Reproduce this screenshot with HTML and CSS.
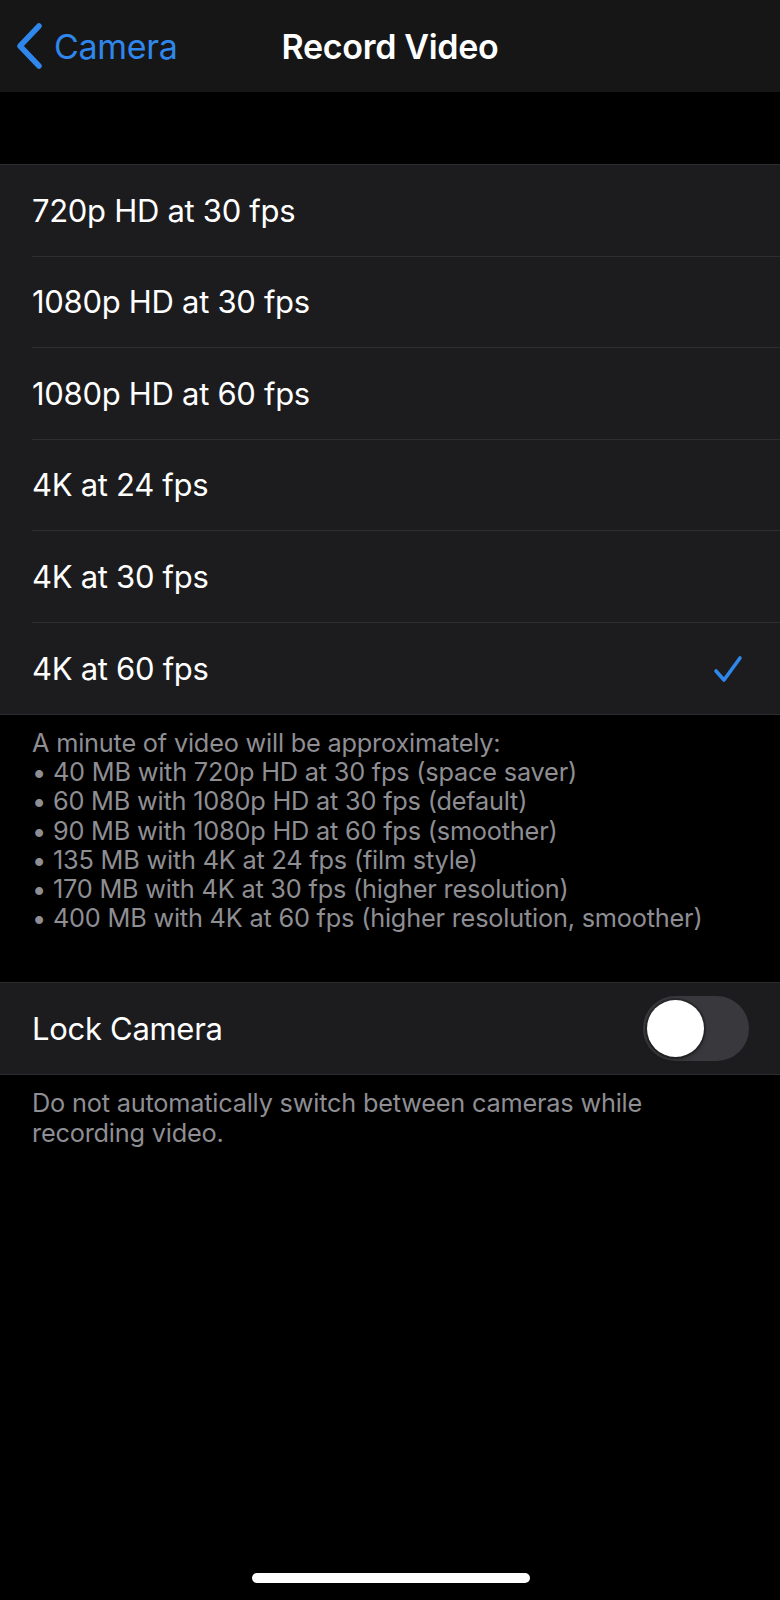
FILE: index.html
```html
<!DOCTYPE html>
<html>
<head>
<meta charset="utf-8">
<link rel="stylesheet" href="styles.css">
</head>
<body>
<div class="screen">
  <header class="nav">
    <div class="back">
      <svg class="chev" width="30" height="46" viewBox="0 0 30 46"><path d="M24 3 L5 23 L24 43" fill="none" stroke="#2f86eb" stroke-width="5.5" stroke-linecap="round" stroke-linejoin="round"/></svg>
      <span class="back-label">Camera</span>
    </div>
    <div class="title">Record Video</div>
    <div></div>
  </header>
  <div class="gap-top"></div>
  <section class="group">
    <div class="row"><div class="row-in"><span>720p HD at 30 fps</span></div></div>
    <div class="row"><div class="row-in"><span>1080p HD at 30 fps</span></div></div>
    <div class="row"><div class="row-in"><span>1080p HD at 60 fps</span></div></div>
    <div class="row"><div class="row-in"><span>4K at 24 fps</span></div></div>
    <div class="row"><div class="row-in"><span>4K at 30 fps</span></div></div>
    <div class="row"><div class="row-in last"><span>4K at 60 fps</span>
      <svg class="check" width="32" height="32" viewBox="0 0 32 32"><path d="M4 18 L12 27 L28 5" fill="none" stroke="#2f86eb" stroke-width="3.6" stroke-linecap="round" stroke-linejoin="round"/></svg>
    </div></div>
  </section>
  <div class="footer">
    <div>A minute of video will be approximately:</div>
    <div>• 40 MB with 720p HD at 30 fps (space saver)</div>
    <div>• 60 MB with 1080p HD at 30 fps (default)</div>
    <div>• 90 MB with 1080p HD at 60 fps (smoother)</div>
    <div>• 135 MB with 4K at 24 fps (film style)</div>
    <div>• 170 MB with 4K at 30 fps (higher resolution)</div>
    <div>• 400 MB with 4K at 60 fps (higher resolution, smoother)</div>
  </div>
  <section class="group group2">
    <div class="row"><div class="row-in last toggle-row"><span>Lock Camera</span>
      <div class="toggle"><div class="knob"></div></div>
    </div></div>
  </section>
  <div class="footer footer2">Do not automatically switch between cameras while recording video.</div>
  <div class="home"></div>
</div>
</body>
</html>
```
FILE: styles.css
```css
html, body {
  margin: 0;
  padding: 0;
  background: #000;
}
.screen {
  position: relative;
  width: 780px;
  height: 1600px;
  background: #000;
  font-family: "Inter", "Liberation Sans", sans-serif;
  color: #fff;
  overflow: hidden;
}
.nav {
  height: 92px;
  background: #161616;
  display: grid;
  grid-template-columns: 1fr auto 1fr;
  align-items: center;
}
.back {
  display: flex;
  align-items: center;
  padding-left: 15px;
  gap: 9px;
}
.chev { display: block; }
.back-label {
  color: #2f86eb;
  font-size: 34px;
  letter-spacing: -0.3px;
}
.title {
  font-size: 34px;
  font-weight: 600;
  letter-spacing: -0.3px;
}
.gap-top { height: 72px; }
.group {
  background: #1c1c1e;
  border-top: 1px solid #2c2c2e;
  border-bottom: 1px solid #2c2c2e;
}
.row {
  height: 91.5px;
  padding-left: 32px;
}
.row-in {
  height: 100%;
  box-sizing: border-box;
  border-bottom: 1.5px solid #2e2e30;
  display: flex;
  align-items: center;
  justify-content: space-between;
  padding-right: 36px;
  font-size: 31px;
  letter-spacing: -0.3px;
}
.row-in.last { border-bottom: none; }
.check { display: block; margin-top: 2px; }
.footer {
  padding: 13px 32px 0;
  font-size: 25.3px;
  line-height: 29.2px;
  color: #8e8e93;
  letter-spacing: -0.2px;
}
.group2 { margin-top: 50px; }
.group2 .row { height: 91px; }
.toggle-row { padding-right: 31px; }
.toggle {
  width: 106px;
  height: 65px;
  border-radius: 33px;
  background: #39393d;
  position: relative;
}
.knob {
  position: absolute;
  left: 4px;
  top: 4px;
  width: 57px;
  height: 57px;
  border-radius: 50%;
  background: #fff;
  box-shadow: 0 0 0 2px rgba(0,0,0,0.25), 0 2px 5px rgba(0,0,0,0.35);
}
.footer2 { padding-right: 100px; }
.home {
  position: absolute;
  left: 252px;
  top: 1573px;
  width: 278px;
  height: 10px;
  border-radius: 5px;
  background: #fff;
}
```
